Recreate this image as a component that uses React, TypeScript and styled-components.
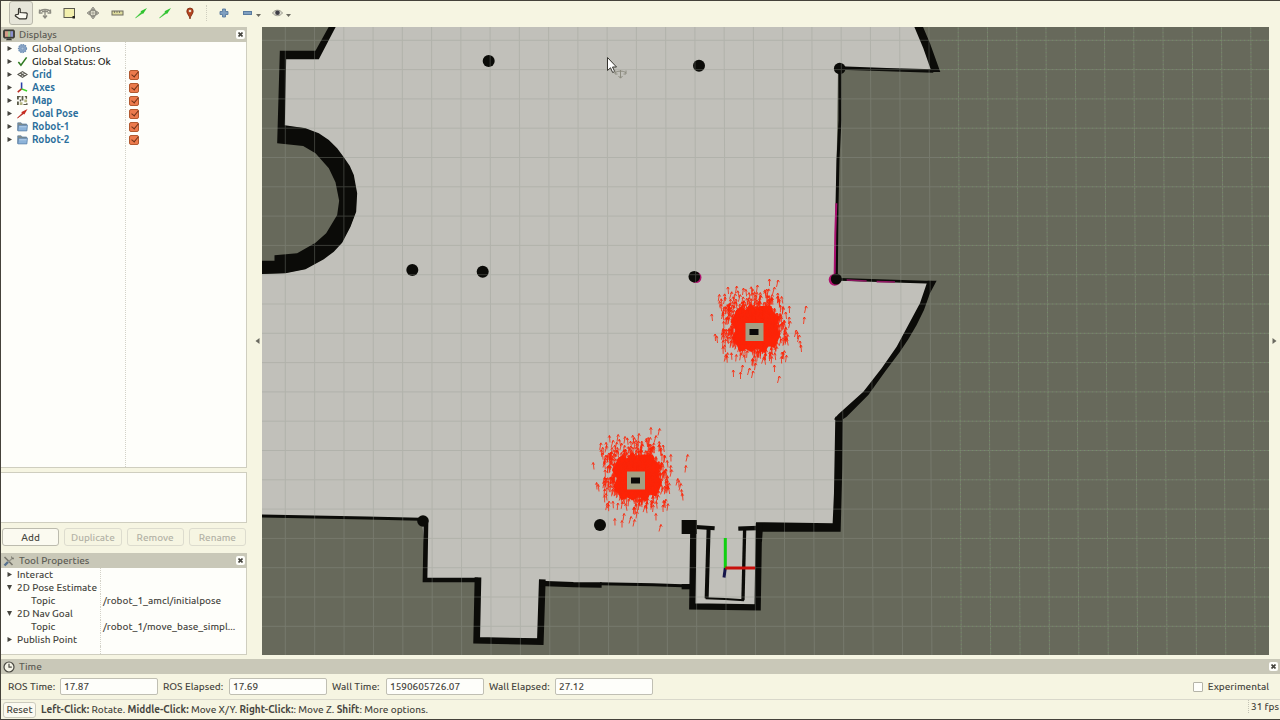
import React from "react";
import styled, { createGlobalStyle, css } from "styled-components";

const c = {
  window: "#f6f5e2",
  header: "#c9c8b8",
  base: "#fefefa",
  line: "#cfcebf",
  text: "#474640",
  faint: "#b3b2a6",
  link: "#2b6f9c",
  frame: "#45423a",
};

const GlobalStyle = createGlobalStyle`
  *, *::before, *::after { box-sizing: border-box; }
  body { margin: 0; background: ${c.window}; }
  body, button, input {
    font-family: Ubuntu, "Noto Sans", "Open Sans", sans-serif;
    font-size: 10px;
    font-weight: 500;
    line-height: 13px;
    color: ${c.text};
  }
`;

const Window = styled.div`
  display: flex;
  flex-direction: column;
  min-height: 100vh;
  background: ${c.window};
  border: 1px solid ${c.frame};
  border-right: 0;
`;

const Toolbar = styled.div`
  display: flex;
  align-items: center;
  height: 26px;
  padding: 0 0 2px 8px;
`;

const ToolButton = styled.button<{ $active?: boolean; $menu?: boolean }>`
  display: flex;
  align-items: center;
  justify-content: center;
  width: ${(p) => (p.$menu ? 30 : 24)}px;
  height: 24px;
  padding: 0;
  border: 1px solid ${(p) => (p.$active ? "#b9b8ab" : "transparent")};
  border-radius: 3px;
  background: ${(p) => (p.$active ? "#e6e5d9" : "transparent")};
`;

const ToolDivider = styled.span`
  width: 1px;
  height: 16px;
  margin: 0 5px;
  border-left: 1px dotted #cfcebf;
`;

const Middle = styled.div`
  flex: 1;
  display: flex;
  align-items: stretch;
`;

const Dock = styled.aside`
  display: flex;
  flex-direction: column;
  width: 246px;
  flex: none;
`;

const Handle = styled.button<{ $wide?: boolean }>`
  display: flex;
  align-items: center;
  justify-content: ${(p) => (p.$wide ? "flex-end" : "center")};
  flex: none;
  width: ${(p) => (p.$wide ? 15 : 11)}px;
  padding: 0 2px;
  border: 0;
  background: transparent;
`;

const Viewport = styled.main`
  flex: 1;
  min-width: 0;
  contain: size;
  background: #67695b;
`;

const Scene = styled.svg`
  display: block;
  width: 100%;
  height: 100%;
`;

const PanelHeader = styled.header`
  display: flex;
  align-items: center;
  flex: none;
  height: 15px;
  padding: 0 2px;
  gap: 4px;
  background: ${c.header};
`;

const PanelTitle = styled.h2`
  flex: 1;
  margin: 0;
  font-size: 10px;
  font-weight: 500;
  color: #5d5c55;
`;

const CloseButton = styled.button`
  display: grid;
  place-items: center;
  width: 9px;
  height: 9px;
  padding: 0;
  border: 0;
  border-radius: 2px;
  background: ${c.base};
`;

const Tree = styled.div<{ $grow?: boolean }>`
  display: flex;
  flex-direction: column;
  background: ${c.base};
  border-bottom: 1px solid ${c.line};
  border-right: 1px solid ${c.line};
  ${(p) => (p.$grow ? css`flex: 1;` : css`flex: none; height: 87px;`)}
`;

const TreeRow = styled.div<{ $split: number; $fill?: boolean }>`
  display: grid;
  grid-template-columns: ${(p) => p.$split}px 1fr;
  ${(p) => (p.$fill ? css`flex: 1;` : css`height: 13px;`)}
`;

const NameCell = styled.div<{ $gap?: number }>`
  display: flex;
  align-items: center;
  padding-left: 5px;
  gap: ${(p) => p.$gap ?? 4}px;
  border-right: 1px dotted #d3d2c8;
  white-space: nowrap;
`;

const ValueCell = styled.div`
  display: flex;
  align-items: center;
  padding: 0 2px;
  white-space: nowrap;
`;

const Name = styled.span<{ $tone?: "link" | "strong"; $indent?: boolean }>`
  padding-left: ${(p) => (p.$indent ? 14 : 0)}px;
  ${(p) => p.$tone === "link" && css`color: ${c.link}; font-weight: 700;`}
  ${(p) => p.$tone === "strong" && css`color: #1f1f1b;`}
`;

const Tick = styled.input`
  appearance: none;
  position: relative;
  width: 10px;
  height: 10px;
  margin: 0 0 0 1px;
  border: 1px solid #b3592f;
  border-radius: 2px;
  background: #ec7a4c;
  &::after {
    content: "";
    position: absolute;
    left: 3px;
    top: -1px;
    width: 4px;
    height: 7px;
    border: solid #6e3219;
    border-width: 0 1px 1px 0;
    transform: rotate(40deg);
  }
`;

const Description = styled.div`
  flex: none;
  height: 51px;
  margin-top: 4px;
  background: ${c.base};
  border: 1px solid ${c.line};
  border-left: 0;
`;

const ButtonRow = styled.div`
  display: grid;
  grid-template-columns: repeat(4, 1fr);
  flex: none;
  gap: 5px;
  padding: 5px 1px 7px;
`;

const PushButton = styled.button`
  height: 18px;
  padding: 0;
  border: 1px solid #bcbbae;
  border-radius: 3px;
  background: #fbfaf0;
  &:disabled {
    color: ${c.faint};
    border-color: #dddcce;
    background: ${c.window};
  }
`;

const TimeRow = styled.form`
  display: flex;
  align-items: center;
  height: 25px;
  padding: 0 11px 0 7px;
`;

const Field = styled.label<{ $label: number }>`
  display: grid;
  grid-template-columns: ${(p) => p.$label}px 98px;
  align-items: center;
  margin-right: 5px;
  white-space: nowrap;
`;

const TextBox = styled.input`
  width: 98px;
  height: 17px;
  padding: 0 3px;
  border: 1px solid #c0bfb3;
  border-radius: 2px;
  background: ${c.base};
`;

const Experimental = styled.label`
  display: flex;
  align-items: center;
  gap: 5px;
  margin-left: auto;
`;

const Box = styled.input`
  appearance: none;
  width: 10px;
  height: 10px;
  margin: 0;
  border: 1px solid #b5b4a8;
  border-radius: 1px;
  background: ${c.base};
`;

const StatusBar = styled.footer`
  display: flex;
  align-items: center;
  height: 20px;
  padding-left: 2px;
  gap: 5px;
  border-top: 1px solid #d9d8cb;
`;

const ResetButton = styled(PushButton)`
  width: 33px;
  height: 16px;
  border-color: #cccbbd;
`;

const Hint = styled.p`
  flex: 1;
  margin: 0;
`;

const Fps = styled.output`
  align-self: flex-start;
  width: 32px;
  padding-left: 2px;
  border-left: 1px dotted #c4c3b5;
  white-space: nowrap;
`;

const Cross = () => (
  <svg width="5" height="5" viewBox="0 0 5 5" stroke="#45443e" strokeWidth="1.6">
    <path d="M.5 .5l4 4M4.500 .5l-4 4" />
  </svg>
);

const Expander = ({ open }: { open?: boolean }) => (
  <svg width="7" height="7" viewBox="0 0 7 7" fill="#45443e">
    {open ? <path d="M1 1h5L3.500 6z" /> : <path d="M1.500 1L6 3.500 1.500 6z" />}
  </svg>
);

const rowIcons: Record<string, React.ReactNode> = {
  gear: (
    <g fill="#8aa5c6" stroke="#6f90b6">
      <circle cx="6" cy="6" r="4.300" strokeDasharray="1.500 1" strokeWidth="1.500" />
      <circle cx="6" cy="6" r="1.500" fill="#a9c0da" strokeWidth=".6" />
    </g>
  ),
  check: <path d="M1.500 6.500l2.800 3.500L10.500 1.500" fill="none" stroke="#2f7a22" strokeWidth="1.700" />,
  grid: (
    <g fill="none" stroke="#56554d" strokeWidth="1.100">
      <path d="M1 6l5-3.200L11 6 6 9.200zM3.500 4.400l5 3.200M8.500 4.400l-5 3.200" />
    </g>
  ),
  axes: (
    <g fill="none" strokeWidth="1.700">
      <path d="M5 7.500V.5" stroke="#2b3fa8" />
      <path d="M5 7.500L.8 11" stroke="#b82a20" />
      <path d="M5 7.500l6 2.300" stroke="#3fd02c" />
    </g>
  ),
  map: (
    <g fill="#5a5a48">
      <path d="M0 1h4v1.500H2V5H0zM5 1h2v5H5zM8.500 1H11v3H9.500V2.500h-1zM0 7h2v4H0zM3 5h1.500v2H3zM10 9h1.500v2H7V9.700h3z" />
      <path d="M3 8h3v3H3zM8 5h3v3H8z" fill="#b3b47f" />
    </g>
  ),
  pose: (
    <g>
      <path d="M.5 11L7 4.500l1 1z" fill="#b3241b" stroke="#b3241b" strokeWidth=".8" />
      <path d="M4.500 4.500L11.500 1 8 7.200z" fill="#c92b20" />
    </g>
  ),
  folder: (
    <g stroke="#587ea6" strokeWidth=".8">
      <path d="M.8 10.500V2h3.700l1 1.300h5V5" fill="#8d8f80" />
      <path d="M1.600 4.500h9.800l-.6 6.300H1z" fill="#8db3d9" />
      <path d="M2.500 6.300h8" stroke="#c2d8ee" />
    </g>
  ),
};

const displays: { name: string; icon: string; tone?: "link" | "strong"; checked?: boolean }[] = [
  { name: "Global Options", icon: "gear" },
  { name: "Global Status: Ok", icon: "check", tone: "strong" },
  { name: "Grid", icon: "grid", tone: "link", checked: true },
  { name: "Axes", icon: "axes", tone: "link", checked: true },
  { name: "Map", icon: "map", tone: "link", checked: true },
  { name: "Goal Pose", icon: "pose", tone: "link", checked: true },
  { name: "Robot-1", icon: "folder", tone: "link", checked: true },
  { name: "Robot-2", icon: "folder", tone: "link", checked: true },
];

const toolProps: { name: string; value?: string; open?: boolean }[] = [
  { name: "Interact" },
  { name: "2D Pose Estimate", open: true },
  { name: "Topic", value: "/robot_1_amcl/initialpose" },
  { name: "2D Nav Goal", open: true },
  { name: "Topic", value: "/robot_1/move_base_simpl..." },
  { name: "Publish Point" },
];

const greenArrow = (
  <g fill="#2fc32f">
    <path d="M2.500 13L9 6.500l1.200 1.200z" stroke="#2fc32f" strokeWidth=".5" />
    <path d="M7.500 6.200L14 3l-4 6z" />
  </g>
);

const tools: { label: string; active?: boolean; art: React.ReactNode }[] = [
  {
    label: "Interact",
    active: true,
    art: (
      <path
        d="M5.500 9V4.200c0-1.200 1.700-1.200 1.700 0V7.500l5.800.4c1 .1 1.300.7 1.200 1.500l-.5 3.200c-.1.900-.6 1.300-1.400 1.300H6.500L2.400 11c-.5-1 .4-1.700 1.200-1.300z"
        fill="#fbfaf2"
        stroke="#34332d"
        strokeWidth="1.200"
      />
    ),
  },
  {
    label: "Move Camera",
    art: (
      <g fill="none" stroke="#8d8c82" strokeWidth="1.300">
        <path d="M2 7.500c2-4 10-4 12 0M2.500 4.500V8H5.500M13.500 4.500V8H10.500" />
        <path d="M8 4v8.500M6 10.500L8 13l2-2.500M5 6.500h6" />
      </g>
    ),
  },
  {
    label: "Select",
    art: (
      <g>
        <rect x="3" y="3.500" width="10.500" height="9" fill="#f3f0ae" stroke="#5b5a4e" />
        <path d="M11.500 11h2.500v2.500h-2.500z" fill="#24231f" />
      </g>
    ),
  },
  {
    label: "Focus Camera",
    art: (
      <g fill="#aeada2" stroke="#8d8c82" strokeWidth=".8">
        <path d="M8 2l2 2.500H6zM8 14l2-2.500H6zM2 8l2.500-2v4zM14 8l-2.500-2v4z" />
        <circle cx="8" cy="8" r="3" fill="none" strokeWidth="1.300" />
        <path d="M8 5v6M5 8h6" />
      </g>
    ),
  },
  {
    label: "Measure",
    art: (
      <g>
        <rect x="3" y="6" width="11" height="4" fill="#dddb9c" stroke="#6c6b5e" />
        <path d="M5.500 6v2M8 6v2M10.500 6v2" stroke="#6c6b5e" strokeWidth=".8" />
      </g>
    ),
  },
  { label: "2D Pose Estimate", art: greenArrow },
  { label: "2D Nav Goal", art: greenArrow },
  {
    label: "Publish Point",
    art: (
      <g>
        <path d="M9 14C8.500 10.500 5.800 9 5.800 6.200a3.200 3.200 0 0 1 6.400 0C12.200 9 9.500 10.500 9 14z" fill="#b3431f" stroke="#7e2c12" strokeWidth=".8" />
        <circle cx="9" cy="6" r="1.300" fill="#e8ddcc" />
      </g>
    ),
  },
];

const gridColumns = Array.from({ length: 35 }, (_, i) => i);
const gridRows = Array.from({ length: 21 }, (_, i) => i);

/* Small deterministic generator so both clouds keep their shape between renders. */
function makeRandom(seed: number) {
  let s = seed;
  return () => {
    s = (s * 1664525 + 1013904223) % 4294967296;
    return s / 4294967296;
  };
}

function arrow(x: number, y: number, tilt: number, len: number) {
  const f = (n: number) => n.toFixed(1);
  return `M${f(x)} ${f(y + len)}L${f(x + tilt)} ${f(y)}m-1.300 2.200l1.300-2.200 1.300 2.200`;
}

const strays: [number, number][] = [
  [15, -53], [22, -52], [2, -47], [-26, -45], [-19, -46], [24, -39], [35, -26], [50, -26],
  [49, -15], [-42, -18], [-37, 4], [-39, 2], [40, -2], [43, 3], [46, 9], [47, 13],
  [-21, 38], [-14, 40], [-13, 33], [-7, 36], [0, 31], [20, 33], [23, 44], [-31, -35],
  [-29, 13], [28, 20], [34, -15], [32, -20], [43, 0], [-12, -44], [-3, 39], [-33, -20],
];

const cloud = (() => {
  const rnd = makeRandom(41);
  let d = "";
  for (let i = 0; i < 620; i++) {
    const x = (rnd() + rnd() - 1) * 37 - 1;
    const y = (rnd() + rnd() - 1) * 38;
    d += arrow(x, y - 9, (rnd() - 0.4) * 4, 7);
  }
  strays.forEach(([x, y]) => {
    d += arrow(x, y, (rnd() - 0.3) * 3, 7);
  });
  return d;
})();

const Robot = ({ x, y }: { x: number; y: number }) => (
  <g transform={`translate(${x} ${y})`}>
    <path d="M-18-22L-13-26-9-22-4-29 1-23 6-26 17-26 19-19 25-15 22-6 26 2 23 10 20 16 14 14 10 21 3 16-3 20-9 17-15 20-18 12-23 6-19-2-24-10z" fill="#ff2306" />
    <path d={cloud} fill="none" stroke="#fb2508" strokeWidth=".8" />
    <rect x="-9" y="-9" width="18" height="18" fill="#a3a083" />
    <rect x="-5" y="-3" width="9" height="6" fill="#0a0a08" />
  </g>
);

const FloorMap = () => (
  <Scene viewBox="262 27 1007 628" preserveAspectRatio="xMidYMid slice" role="img" aria-label="Map view">
    <path
      fill="#c1c0ba"
      d="M334 27L317 57H285L284 126 305 128 328 140 343 157 353 175 356.700 193 355.700 212 350 227 341.700 242.700 323 259 305 269 285 273 262 274V516L422 519 427 579 478 580 477 638 540 640 543 583 690 585 692 606 759 607 760 527H838V420L870 388 905 340 930 283 835 280 838 69 935 70 916 27z"
    />
    <g stroke="#0b0b08" fill="none">
      <g transform="translate(260.500 20) scale(.3333)">
        <path
          fill="#0b0b08"
          stroke="none"
          d="M205 20H226L175 118H77L73 316 135 325 175 340 205 360 230 385 250 412 268 438 280 465 290 520 287 575 270 620 245 668 220 695 190 718 135 748 75 760 4 762V722H42V706L110 700 165 668 197 640 230 585 236 542 225 487 205 445 165 400 128 378 50 370 58 92H165z"
        />
      </g>
      <g transform="translate(600 20) scale(.3333)">
        <path fill="#0b0b08" stroke="none" d="M942 18H968L990 70 1021 156H995L970 85z" />
        <path d="M719 144L860 149 1000 153" strokeWidth="10" />
        <path d="M720 150V300L714 420 711 560 709 775" strokeWidth="9" />
        <path d="M709 550L706 640 704 770" stroke="#a8106e" strokeWidth="6" />
        <path d="M720 778L1000 787" strokeWidth="8" />
        <path d="M740 780L800 783M830 785L885 786" stroke="#8d1560" strokeWidth="5" />
      </g>
      <g transform="translate(580 260) scale(.3333)">
        <path fill="#0b0b08" stroke="none" d="M1043 62H1070L1050 100 1032 150 1010 195 985 238 960 275 915 335 865 405 800 470 780 484 762 478 775 463 850 395 905 325 950 260 985 195 1020 130z" />
        <path fill="#0b0b08" stroke="none" d="M528 787H553L758 790 762 700 766 470H789L787 620 782 815H548L546 845H528z" />
      </g>
      <g transform="translate(400 490) scale(.3333)">
        <path d="M-416 78L-100 84 60 88" strokeWidth="9" />
        <path d="M78 100L75 270H234" strokeWidth="14" />
        <path d="M234 262L230 451 421 455 427 268" strokeWidth="20" />
        <path d="M418 280L520 284 605 285" strokeWidth="16" />
        <path d="M600 281L760 284 868 288" strokeWidth="9" />
        <path d="M845 290H872" strokeWidth="16" />
        <path d="M845 90h46v42h-46z" fill="#0b0b08" stroke="none" />
        <path d="M880 125L877 349 1073 352 1077 100" strokeWidth="19" />
        <path d="M888 111L944 115" strokeWidth="12" />
        <path d="M926 112L920 325" strokeWidth="12" />
        <path d="M917 325L975 327 1032 331" strokeWidth="6" />
        <path d="M1029 331L1034 118" strokeWidth="10" />
        <path d="M1015 116L1075 114" strokeWidth="13" />
      </g>
    </g>
    <g fill="#b0126f">
      <circle cx="696" cy="277.500" r="5.500" />
      <circle cx="834.700" cy="279.800" r="6" />
    </g>
    <g fill="#0b0b08">
      <circle cx="488.700" cy="61" r="6" />
      <circle cx="412.300" cy="270" r="6" />
      <circle cx="482.700" cy="271.700" r="6" />
      <circle cx="699" cy="65.700" r="6" />
      <circle cx="694.300" cy="276.700" r="5.800" />
      <circle cx="839.700" cy="68.500" r="5.800" />
      <circle cx="836.300" cy="279" r="5.500" />
      <circle cx="600" cy="525" r="6" />
      <circle cx="423" cy="521" r="5.800" />
    </g>
    <g stroke="#959a90" strokeWidth="1" opacity=".34">
      {gridColumns.map((i) => (
        <line key={i} x1={285.3 + i * 29.25} y1="0" x2={285.3 + i * 29.4} y2="700" />
      ))}
      {gridRows.map((i) => (
        <line key={i} x1="-200" y1={40.3 + i * 29.3} x2="1700" y2={40.3 + i * 29.3} />
      ))}
    </g>
    <g stroke="#74b862" strokeWidth="1" strokeDasharray="1 3" opacity=".35">
      {gridColumns.slice(23).map((i) => (
        <line key={i} x1={285.3 + i * 29.25} y1="0" x2={285.3 + i * 29.4} y2="700" />
      ))}
      {gridRows.map((i) => (
        <line key={i} x1="940" y1={40.3 + i * 29.3} x2="1700" y2={40.3 + i * 29.3} />
      ))}
    </g>
    <Robot x={754.5} y={332} />
    <Robot x={636} y={480.5} />
    <g strokeWidth="3" fill="none">
      <path d="M725.300 568L724 577.500" stroke="#15154a" />
      <path d="M725.300 568V538" stroke="#10d010" />
      <path d="M725.300 568H755" stroke="#c8100c" />
    </g>
    <path d="M607.500 57.500v13l3-2.700 2.200 4.700 2-1-2.200-4.500h4z" fill="#fff" stroke="#35342e" strokeWidth="1" />
    <g fill="none" stroke="#8d8c80" strokeWidth="1">
      <path d="M615 73c2-2.500 9-2.500 11 0M620.500 70v8M618.500 76l2 2.200 2-2.200M615 70.500V74h2.500M626 70.500V74h-2.500" />
    </g>
  </Scene>
);

export default function App() {
  return (
    <Window>
      <GlobalStyle />
      <Toolbar role="toolbar" aria-label="Tools">
        {tools.map((t) => (
          <ToolButton key={t.label} type="button" aria-label={t.label} $active={t.active}>
            <svg width="16" height="16" viewBox="0 0 16 16">{t.art}</svg>
          </ToolButton>
        ))}
        <ToolDivider />
        <ToolButton type="button" aria-label="Add tool">
          <svg width="16" height="16" viewBox="0 0 16 16">
            <path d="M6.500 4h3v2.500H12v3H9.500V12h-3V9.500H4v-3h2.500z" fill="#7f9fc0" stroke="#5a7b9f" strokeWidth=".9" />
          </svg>
        </ToolButton>
        <ToolButton type="button" aria-label="Remove tool" $menu>
          <svg width="22" height="16" viewBox="0 0 22 16">
            <rect x="3.500" y="6.500" width="8" height="3" fill="#7f9fc0" stroke="#5a7b9f" />
            <path d="M16 9h5l-2.500 3z" fill="#6b6a60" />
          </svg>
        </ToolButton>
        <ToolButton type="button" aria-label="Tool visibility" $menu>
          <svg width="22" height="16" viewBox="0 0 22 16">
            <path d="M2.500 8c2.500-3.800 7.500-3.800 10 0-2.500 3.600-7.500 3.600-10 0z" fill="#dddcd0" stroke="#8a897e" strokeWidth=".8" />
            <circle cx="7.500" cy="7.800" r="2.300" fill="#3f3e46" />
            <path d="M16 9h5l-2.500 3z" fill="#6b6a60" />
          </svg>
        </ToolButton>
      </Toolbar>

      <Middle>
        <Dock>
          <PanelHeader>
            <svg width="12" height="12" viewBox="0 0 12 12">
              <rect x=".7" y="1" width="10.600" height="8" rx="1" fill="#4a4942" stroke="#2f2e29" />
              <path d="M2 2.200h3v5.600H2z" fill="#d59a86" />
              <path d="M5 2.200h2.500v5.600H5z" fill="#9bc48b" />
              <path d="M7.500 2.200H10v5.600H7.500z" fill="#8c8fd0" />
              <path d="M4 9.500h4l1 1.800H3z" fill="#3b3a34" />
            </svg>
            <PanelTitle>Displays</PanelTitle>
            <CloseButton type="button" aria-label="Close Displays"><Cross /></CloseButton>
          </PanelHeader>
          <Tree $grow>
            {displays.map((d) => (
              <TreeRow key={d.name} $split={125}>
                <NameCell>
                  <Expander />
                  <svg width="11" height="11" viewBox="0 0 12 12">{rowIcons[d.icon]}</svg>
                  <Name $tone={d.tone}>{d.name}</Name>
                </NameCell>
                <ValueCell>
                  {d.checked && <Tick type="checkbox" defaultChecked aria-label={d.name} />}
                </ValueCell>
              </TreeRow>
            ))}
            <TreeRow $split={125} $fill>
              <NameCell />
              <ValueCell />
            </TreeRow>
          </Tree>
          <Description />
          <ButtonRow>
            <PushButton type="button">Add</PushButton>
            <PushButton type="button" disabled>Duplicate</PushButton>
            <PushButton type="button" disabled>Remove</PushButton>
            <PushButton type="button" disabled>Rename</PushButton>
          </ButtonRow>
          <PanelHeader>
            <svg width="12" height="12" viewBox="0 0 12 12" fill="none">
              <path d="M1.500 2l8 8" stroke="#77766c" strokeWidth="1.600" />
              <path d="M10.500 2.500L5 7" stroke="#96958a" strokeWidth="1.500" />
              <path d="M1.500 10.500L5 7" stroke="#56718f" strokeWidth="2.400" />
              <path d="M8.500 1.500l.5 2 2 .3" stroke="#77766c" strokeWidth="1" />
            </svg>
            <PanelTitle>Tool Properties</PanelTitle>
            <CloseButton type="button" aria-label="Close Tool Properties"><Cross /></CloseButton>
          </PanelHeader>
          <Tree>
            {toolProps.map((p, i) => (
              <TreeRow key={i} $split={100}>
                <NameCell $gap={4}>
                  {p.value ? <svg width="7" height="7" /> : <Expander open={p.open} />}
                  <Name $indent={!!p.value}>{p.name}</Name>
                </NameCell>
                <ValueCell>{p.value}</ValueCell>
              </TreeRow>
            ))}
            <TreeRow $split={100} $fill>
              <NameCell />
              <ValueCell />
            </TreeRow>
          </Tree>
        </Dock>
        <Handle type="button" aria-label="Hide left dock" $wide>
          <svg width="5" height="6" viewBox="0 0 5 6"><path d="M4.500 0v6L.5 3z" fill="#6b6a60" /></svg>
        </Handle>
        <Viewport>
          <FloorMap />
        </Viewport>
        <Handle type="button" aria-label="Hide right dock">
          <svg width="5" height="6" viewBox="0 0 5 6"><path d="M.5 0v6l4-3z" fill="#6b6a60" /></svg>
        </Handle>
      </Middle>

      <TimePanel />
    </Window>
  );
}

const TimeSection = styled.section`
  flex: none;
  margin-top: 4px;
`;

const fields = [
  { label: "ROS Time:", value: "17.87", width: 52 },
  { label: "ROS Elapsed:", value: "17.69", width: 66 },
  { label: "Wall Time:", value: "1590605726.07", width: 54 },
  { label: "Wall Elapsed:", value: "27.12", width: 66 },
];

function TimePanel() {
  return (
    <TimeSection>
      <PanelHeader>
        <svg width="12" height="12" viewBox="0 0 12 12" fill="none" stroke="#4a4942" strokeWidth="1.200">
          <circle cx="6" cy="6" r="5" fill="#f4f3e6" />
          <path d="M6 2.800V6.200h2.800" />
        </svg>
        <PanelTitle>Time</PanelTitle>
        <CloseButton type="button" aria-label="Close Time"><Cross /></CloseButton>
      </PanelHeader>
      <TimeRow>
        {fields.map((f) => (
          <Field key={f.label} $label={f.width}>
            {f.label}
            <TextBox type="text" defaultValue={f.value} />
          </Field>
        ))}
        <Experimental>
          <Box type="checkbox" />
          Experimental
        </Experimental>
      </TimeRow>
      <StatusBar>
        <ResetButton type="button">Reset</ResetButton>
        <Hint>
          <b>Left-Click:</b> Rotate. <b>Middle-Click:</b> Move X/Y. <b>Right-Click:</b>: Move Z. <b>Shift</b>: More options.
        </Hint>
        <Fps>31 fps</Fps>
      </StatusBar>
    </TimeSection>
  );
}
